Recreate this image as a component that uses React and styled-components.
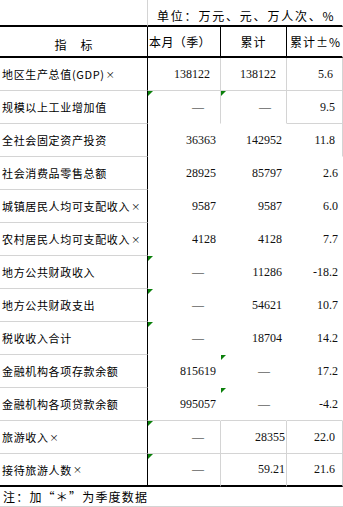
import React from 'react';
import styled, {createGlobalStyle} from 'styled-components';

const GlobalStyle = createGlobalStyle`
  body {
    margin: 0;
    background: #fff;
  }
`;

const GRAY = '#d4d4d4';
const CJK = '"Noto Sans CJK SC", "Noto Sans", sans-serif';
const NUM = '"Liberation Serif", "Times New Roman", serif';

const Sheet = styled.div`
  width: 343px;
  height: 507px;
  overflow: hidden;
  font-family: ${CJK};
  color: #000;
`;

const Row = styled.div`
  display: grid;
  grid-template-columns: 148px 73px 66px 56px;
  height: ${p => p.$h}px;
`;

const Cell = styled.div`
  position: relative;
  box-sizing: border-box;
  display: flex;
  align-items: center;
  justify-content: ${p => p.$align || 'flex-start'};
  border-right: 1px solid ${p => p.$r || 'transparent'};
  border-bottom: ${p => p.$bw || 1}px solid ${p => p.$b || 'transparent'};
  padding-left: ${p => p.$pl || 0}px;
  padding-right: ${p => p.$pr || 0}px;
  white-space: nowrap;
  min-width: 0;
`;

const UnitCell = styled(Cell)`
  grid-column: 2 / 5;
  align-items: flex-end;
  padding-bottom: 1px;
  padding-left: 9px;
`;

const UnitText = styled.span`
  font-size: 12px;
  letter-spacing: 1.8px;
  line-height: 16px;
`;

const HeadText = styled.span`
  font-size: 12px;
  letter-spacing: ${p => p.$ls || 0.4}px;
  padding-top: ${p => p.$pt || 0}px;
`;

const Name = styled.span`
  font-size: 11px;
  letter-spacing: 0.65px;
`;

const Star = styled.span`
  font-size: 9px;
  margin-left: 1px;
`;

const Num = styled.span`
  font-family: ${NUM};
  font-size: 12px;
  color: #111;
`;

const Flag = styled.span`
  position: absolute;
  top: 0;
  left: 0;
  width: 0;
  height: 0;
  border-top: 5px solid #0b800b;
  border-right: 5px solid transparent;
`;

const Note = styled.div`
  box-sizing: border-box;
  height: 20px;
  border-bottom: 1px solid ${GRAY};
  padding-left: 3px;
  display: flex;
  align-items: center;
  font-size: 12px;
  letter-spacing: 1.2px;
  font-feature-settings: "fwid";
  white-space: nowrap;
`;

// g: gridlines for columns 2-4 -> [right, bottom] colour per column
const none = [[null, null], [null, null], [null, null]];
const boxed = [[GRAY, GRAY], [GRAY, GRAY], [GRAY, GRAY]];

const rows = [
    {name: '地区生产总值(GDP)', star: true, v: ['138122', '138122', '5.6'], pads: [10, 10, 9], g: boxed},
    {name: '规模以上工业增加值', v: ['—', '—', '9.5'], pads: [16, 15, 7], flags: [1, 2],
        g: [[GRAY, null], [GRAY, null], [GRAY, GRAY]]},
    {name: '全社会固定资产投资', v: ['36363', '142952', '11.8'], pads: [4, 4, 7],
        g: [[null, null], [null, null], [GRAY, null]]},
    {name: '社会消费品零售总额', v: ['28925', '85797', '2.6'], pads: [4, 4, 4], g: none},
    {name: '城镇居民人均可支配收入', star: true, v: ['9587', '9587', '6.0'], pads: [4, 4, 4], g: none},
    {name: '农村居民人均可支配收入', star: true, v: ['4128', '4128', '7.7'], pads: [4, 4, 4], g: none},
    {name: '地方公共财政收入', v: ['—', '11286', '-18.2'], pads: [16, 4, 4], flags: [1], g: none},
    {name: '地方公共财政支出', v: ['—', '54621', '10.7'], pads: [16, 4, 4], flags: [1], g: none},
    {name: '税收收入合计', v: ['—', '18704', '14.2'], pads: [16, 4, 4], flags: [1], g: none},
    {name: '金融机构各项存款余额', v: ['815619', '—', '17.2'], pads: [4, 16, 4], flags: [2], g: none},
    {name: '金融机构各项贷款余额', v: ['995057', '—', '-4.2'], pads: [4, 16, 4], flags: [2],
        g: [[null, GRAY], [null, GRAY], [null, GRAY]]},
    {name: '旅游收入', star: true, v: ['—', '28355', '22.0'], pads: [16, 1, 7], flags: [1], g: boxed},
    {name: '接待旅游人数', star: true, v: ['—', '59.21', '21.6'], pads: [16, 1, 7], flags: [1], g: boxed, last: true},
];

const DataRow = ({row}) => {
    const bw = row.last ? 2 : 1;
    return (
        <Row $h={33}>
            <Cell $r="#000" $b={row.last ? '#000' : GRAY} $bw={bw} $pl={2}>
                <Name>{row.name}</Name>
                {row.star && <Star>×</Star>}
            </Cell>
            {row.v.map((val, i) => (
                <Cell key={i}
                      $align="flex-end"
                      $pr={row.pads[i]}
                      $r={row.g[i][0]}
                      $b={row.last ? '#000' : row.g[i][1]}
                      $bw={bw}>
                    {row.flags && row.flags.includes(i + 1) && <Flag/>}
                    <Num>{val}</Num>
                </Cell>
            ))}
        </Row>
    );
};

export default function App() {
    return (
        <Sheet>
            <GlobalStyle/>
            <Row $h={27}>
                <Cell $r={GRAY} $b="#000" $bw={2}/>
                <UnitCell $b="#000" $bw={2}>
                    <UnitText>单位：万元、元、万人次、%</UnitText>
                </UnitCell>
            </Row>
            <Row $h={31}>
                <Cell $r="#000" $b="#000" $bw={2} $align="center" $pl={14}>
                    <HeadText $ls={14} $pt={6}>指标</HeadText>
                </Cell>
                <Cell $r="#000" $b="#000" $bw={2} $pl={1}>
                    <HeadText>本月（季）</HeadText>
                </Cell>
                <Cell $r="#000" $b="#000" $bw={2} $align="center">
                    <HeadText $ls={1}>累计</HeadText>
                </Cell>
                <Cell $b="#000" $bw={2} $pl={3}>
                    <HeadText $ls={1}>累计±%</HeadText>
                </Cell>
            </Row>
            {rows.map((row, i) => <DataRow key={i} row={row}/>)}
            <Note>注：加“*”为季度数据</Note>
        </Sheet>
    );
}
